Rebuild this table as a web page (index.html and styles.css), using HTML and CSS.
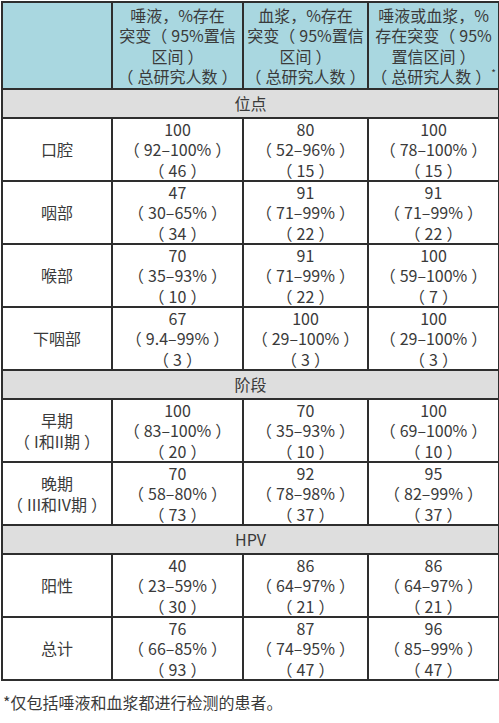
FILE: index.html
```html
<!DOCTYPE html>
<html lang="zh">
<head>
<meta charset="utf-8">
<link rel="stylesheet" href="styles.css">
</head>
<body>
<table class="tbl">
  <colgroup>
    <col class="c1"><col class="c2"><col class="c3"><col class="c4">
  </colgroup>
  <thead>
    <tr class="head">
      <th></th>
      <th>唾液，%存在<br>突变<span class="o">（</span>95%置信<br>区间<span class="c">）</span><br><span class="o">（</span>总研究人数<span class="c">）</span></th>
      <th>血浆，%存在<br>突变<span class="o">（</span>95%置信<br>区间<span class="c">）</span><br><span class="o">（</span>总研究人数<span class="c">）</span></th>
      <th>唾液或血浆，%<br>存在突变<span class="o">（</span>95%<br>置信区间<span class="c">）</span><br><span class="o">（</span>总研究人数<span class="c">）</span><sup>*</sup></th>
    </tr>
  </thead>
  <tbody>
    <tr class="sec"><td colspan="4">位点</td></tr>
    <tr class="row"><td>口腔</td><td>100<br><span class="o">（</span>92–100%<span class="c">）</span><br><span class="o">（</span>46<span class="c">）</span></td><td>80<br><span class="o">（</span>52–96%<span class="c">）</span><br><span class="o">（</span>15<span class="c">）</span></td><td>100<br><span class="o">（</span>78–100%<span class="c">）</span><br><span class="o">（</span>15<span class="c">）</span></td></tr>
    <tr class="row"><td>咽部</td><td>47<br><span class="o">（</span>30–65%<span class="c">）</span><br><span class="o">（</span>34<span class="c">）</span></td><td>91<br><span class="o">（</span>71–99%<span class="c">）</span><br><span class="o">（</span>22<span class="c">）</span></td><td>91<br><span class="o">（</span>71–99%<span class="c">）</span><br><span class="o">（</span>22<span class="c">）</span></td></tr>
    <tr class="row"><td>喉部</td><td>70<br><span class="o">（</span>35–93%<span class="c">）</span><br><span class="o">（</span>10<span class="c">）</span></td><td>91<br><span class="o">（</span>71–99%<span class="c">）</span><br><span class="o">（</span>22<span class="c">）</span></td><td>100<br><span class="o">（</span>59–100%<span class="c">）</span><br><span class="o">（</span>7<span class="c">）</span></td></tr>
    <tr class="row"><td>下咽部</td><td>67<br><span class="o">（</span>9.4–99%<span class="c">）</span><br><span class="o">（</span>3<span class="c">）</span></td><td>100<br><span class="o">（</span>29–100%<span class="c">）</span><br><span class="o">（</span>3<span class="c">）</span></td><td>100<br><span class="o">（</span>29–100%<span class="c">）</span><br><span class="o">（</span>3<span class="c">）</span></td></tr>
    <tr class="sec"><td colspan="4">阶段</td></tr>
    <tr class="row"><td>早期<br><span class="o">（</span>I和II期<span class="c">）</span></td><td>100<br><span class="o">（</span>83–100%<span class="c">）</span><br><span class="o">（</span>20<span class="c">）</span></td><td>70<br><span class="o">（</span>35–93%<span class="c">）</span><br><span class="o">（</span>10<span class="c">）</span></td><td>100<br><span class="o">（</span>69–100%<span class="c">）</span><br><span class="o">（</span>10<span class="c">）</span></td></tr>
    <tr class="row"><td>晚期<br><span class="o">（</span>III和IV期<span class="c">）</span></td><td>70<br><span class="o">（</span>58–80%<span class="c">）</span><br><span class="o">（</span>73<span class="c">）</span></td><td>92<br><span class="o">（</span>78–98%<span class="c">）</span><br><span class="o">（</span>37<span class="c">）</span></td><td>95<br><span class="o">（</span>82–99%<span class="c">）</span><br><span class="o">（</span>37<span class="c">）</span></td></tr>
    <tr class="sec"><td colspan="4">HPV</td></tr>
    <tr class="row"><td>阳性</td><td>40<br><span class="o">（</span>23–59%<span class="c">）</span><br><span class="o">（</span>30<span class="c">）</span></td><td>86<br><span class="o">（</span>64–97%<span class="c">）</span><br><span class="o">（</span>21<span class="c">）</span></td><td>86<br><span class="o">（</span>64–97%<span class="c">）</span><br><span class="o">（</span>21<span class="c">）</span></td></tr>
    <tr class="row"><td>总计</td><td>76<br><span class="o">（</span>66–85%<span class="c">）</span><br><span class="o">（</span>93<span class="c">）</span></td><td>87<br><span class="o">（</span>74–95%<span class="c">）</span><br><span class="o">（</span>47<span class="c">）</span></td><td>96<br><span class="o">（</span>85–99%<span class="c">）</span><br><span class="o">（</span>47<span class="c">）</span></td></tr>
  </tbody>
</table>
<p class="note">*仅包括唾液和血浆都进行检测的患者。</p>
</body>
</html>
```
FILE: styles.css
```css
html, body {
  margin: 0;
  padding: 0;
  background: #ffffff;
}
body {
  font-family: "Noto Sans CJK SC", "Noto Sans", sans-serif;
  color: #3a3a3a;
  font-size: 16px;
}
.tbl {
  border-collapse: collapse;
  margin: 1px 0 0 1px;
  width: 497px;
  table-layout: fixed;
}
.c1 { width: 110px; }
.c2 { width: 131px; }
.c3 { width: 125px; }
.c4 { width: 131px; }
.tbl th, .tbl td {
  border: 2px solid #2e2e2e;
  text-align: center;
  vertical-align: middle;
  padding: 0;
  font-weight: normal;
  line-height: 20.3px;
  overflow: hidden;
  white-space: nowrap;
}
.o { margin-right: 4px; }
.c { margin-left: 4px; }
.head th {
  background: #a9d7e0;
  height: 85px;
  line-height: 20.5px;
}
.head sup {
  font-size: 10px;
  line-height: 0;
  vertical-align: 6px;
}
.sec td {
  background: #dedede;
  height: 27px;
}
.row td {
  height: 61px;
}
.note {
  margin: 10px 0 0 3px;
  font-size: 16px;
  line-height: 22px;
  color: #3a3a3a;
}
```
